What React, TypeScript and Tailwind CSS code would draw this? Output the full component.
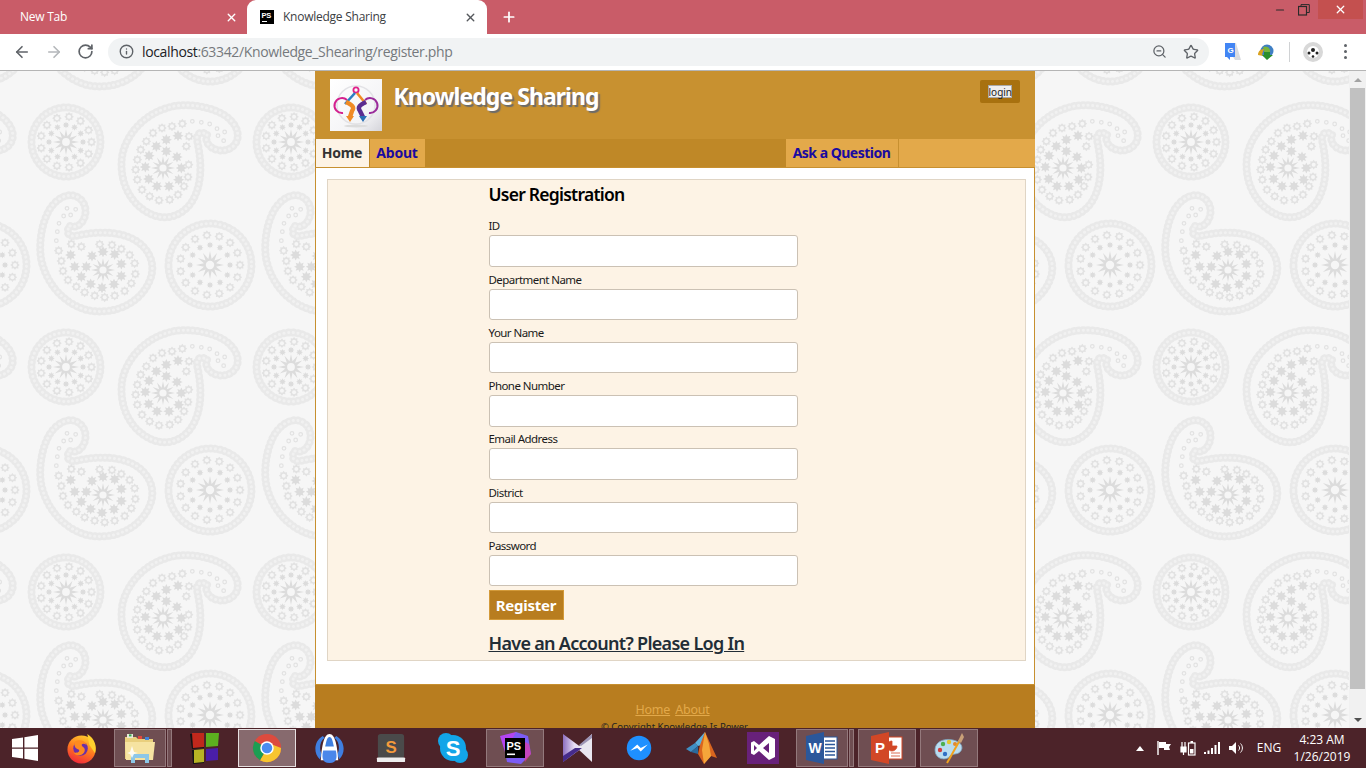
import { ArrowLeft, ArrowRight, RotateCw, Info, ZoomOut, Star, X, Plus, Minus } from "lucide-react";

const INK = "#e2e2e2";
const PAPER = "#f6f6f6";

const starPoints = (r: number, inner: number, n: number) => {
  const pts: string[] = [];
  for (let i = 0; i < n * 2; i++) {
    const rad = i % 2 === 0 ? r : inner;
    const a = (Math.PI * i) / n - Math.PI / 2;
    pts.push(`${(Math.cos(a) * rad).toFixed(2)},${(Math.sin(a) * rad).toFixed(2)}`);
  }
  return pts.join(" ");
};

const onRing = (n: number, r: number) =>
  Array.from({ length: n }, (_, i) => {
    const a = (2 * Math.PI * i) / n;
    return [Math.cos(a) * r, Math.sin(a) * r];
  });

const Gear = ({ x, y }: { x: number; y: number }) => (
  <g transform={`translate(${x} ${y})`}>
    <polygon points={starPoints(4.8, 3.4, 8)} fill={INK} />
    <circle r="2" fill={PAPER} />
  </g>
);

const DarkStar = ({ x, y, r = 5.6 }: { x: number; y: number; r?: number }) => (
  <polygon transform={`translate(${x} ${y})`} points={starPoints(r, r * 0.58, 8)} fill="#dcdcdc" />
);

const Chain = ({ d }: { d: string }) => (
  <g fill="none" strokeLinecap="round">
    <path d={d} stroke="#e9e9e9" strokeWidth="8" strokeDasharray="0.1 4.6" />
    <path d={d} stroke="#f1f1f1" strokeWidth="3" strokeDasharray="0.1 4.6" />
  </g>
);

const circlePath = (r: number) => `M${-r},0 A${r},${r} 0 1 1 ${r},0 A${r},${r} 0 1 1 ${-r},0`;

const CenterStar = ({ r }: { r: number }) => (
  <g>
    <polygon points={starPoints(r, r * 0.45, 12)} fill="#dcdcdc" />
    <circle r={r * 0.3} fill={PAPER} />
  </g>
);

const Medallion = ({ id, chain, gears, gearCount, dots, star }: { id: string; chain: number; gears: number; gearCount: number; dots: number; star: number }) => (
  <g id={id}>
    <Chain d={circlePath(chain)} />
    {onRing(gearCount, gears).map(([x, y], i) => (
      <Gear key={i} x={x} y={y} />
    ))}
    {onRing(12, dots).map(([x, y], i) => (
      <DarkStar key={i} x={x} y={y} r={3.4} />
    ))}
    <CenterStar r={star} />
  </g>
);

// traced from the wallpaper, coordinates are 3x around the centre star
const PAISLEY_STARS = [[535, 198], [500, 210], [470, 230], [500, 245], [448, 258], [532, 262], [437, 292], [545, 295], [447, 328], [537, 330], [472, 350], [508, 350]];
const PAISLEY_GEARS = [[548, 162], [517, 170], [487, 175], [460, 190], [440, 215], [423, 240], [413, 270], [408, 300], [413, 330], [427, 360], [450, 380], [478, 392], [510, 390], [535, 375], [553, 350], [565, 322], [567, 285], [560, 230], [568, 200]];
const PAISLEY_DOTS = [[578, 155], [605, 158], [630, 163], [652, 177], [675, 187], [655, 198], [672, 213]];
const rel = ([x, y]: number[]) => [(x - 490) / 3, (y - 295) / 3];

const Paisley = () => (
  <g id="paisley">
    <Chain d="M44,-33 C40,-22 55,-14 66,-19 C78,-25 78,-40 64,-51 C50,-62 20,-66 4,-60 C-20,-53 -38,-32 -41,-11 C-44,15 -32,38 -10,47 C8,54 24,44 31,30 C40,12 38,-10 34,-28 C33,-34 38,-38 44,-33" />
    {PAISLEY_STARS.map(rel).map(([x, y], i) => (
      <DarkStar key={i} x={x} y={y} />
    ))}
    {PAISLEY_GEARS.map(rel).map(([x, y], i) => (
      <Gear key={i} x={x} y={y} />
    ))}
    {PAISLEY_DOTS.map(rel).map(([x, y], i) => (
      <circle key={i} cx={x} cy={y} r="1.8" fill="none" stroke={INK} strokeWidth="1.2" />
    ))}
    <CenterStar r={12} />
  </g>
);

const Wallpaper = () => {
  const cols = [-1, 0, 1, 2, 3, 4, 5, 6];
  const rows = [-1, 0, 1, 2, 3, 4];
  return (
    <svg className="absolute inset-0 h-full w-full" viewBox="0 71 1366 657" preserveAspectRatio="xMinYMin slice">
      <rect x="0" y="0" width="1366" height="768" fill={PAPER} />
      <defs>
        <Medallion id="m-small" chain={34.5} gears={25.5} gearCount={13} dots={17} star={13} />
        <Medallion id="m-large" chain={41.5} gears={30} gearCount={15} dots={20} star={14} />
        <Paisley />
      </defs>
      {cols.map((c) =>
        rows.map((r) => {
          const dx = c * 225;
          const dy = r * 225;
          return (
            <g key={`${c}-${r}`} transform={`translate(${dx} ${dy})`}>
              <use href="#m-small" x="66" y="142" />
              <use href="#m-large" x="210" y="265" />
              <use href="#paisley" transform="translate(163 168)" />
              <use href="#paisley" transform="translate(103 270) rotate(-90)" />
            </g>
          );
        })
      )}
    </svg>
  );
};

const Logo = () => (
  <svg viewBox="0 0 52 52" className="h-[52px] w-[52px]">
    <defs>
      <linearGradient id="logo-bg" x1="0" y1="0" x2="1" y2="1">
        <stop offset="0" stopColor="#ffffff" />
        <stop offset="0.7" stopColor="#f4f4f6" />
        <stop offset="1" stopColor="#d4d4da" />
      </linearGradient>
    </defs>
    <rect width="52" height="52" fill="url(#logo-bg)" />
    <circle cx="26" cy="26" r="19" fill="none" stroke="#e2e2e6" strokeWidth="1.5" />
    <ellipse cx="26" cy="47" rx="12" ry="1.5" fill="#dcdcdc" />
    <path d="M17 21 A7.5 7.5 0 1 0 13 34" stroke="#d3208f" strokeWidth="2" fill="none" />
    <path d="M35 21 A7.5 7.5 0 1 1 39 34" stroke="#9a2b9a" strokeWidth="2" fill="none" />
    <circle cx="26" cy="11" r="2.6" fill="none" stroke="#e0218a" strokeWidth="1.8" />
    <path d="M25 14 L15 25" stroke="#2b7fc4" strokeWidth="2.6" fill="none" />
    <path d="M27 14 L36 25" stroke="#f08a24" strokeWidth="2.6" fill="none" />
    <path d="M16 23 C22 26 25 28 22 32 L20 38" stroke="#f08a24" strokeWidth="4.4" fill="none" />
    <path d="M36 23 C30 26 27 28 30 32 L33 38" stroke="#5b2d91" strokeWidth="4.4" fill="none" />
    <polygon points="16,37 24,37 20,43" fill="#f08a24" />
    <polygon points="29,37 37,37 33,43" fill="#2b6fb5" />
  </svg>
);

/* ---- taskbar icons ---- */
const WindowsIcon = () => (
  <svg viewBox="0 0 26 26" className="h-[26px] w-[26px]">
    <polygon points="0,4 11,2.4 11,12.4 0,12.4" fill="#fff" />
    <polygon points="12.4,2.2 26,0 26,12.4 12.4,12.4" fill="#fff" />
    <polygon points="0,13.8 11,13.8 11,23.6 0,22" fill="#fff" />
    <polygon points="12.4,13.8 26,13.8 26,26 12.4,23.8" fill="#fff" />
  </svg>
);

const FirefoxIcon = () => (
  <svg viewBox="0 0 32 32" className="h-[31px] w-[31px]">
    <defs>
      <linearGradient id="ff" x1="0.7" y1="0" x2="0.3" y2="1">
        <stop offset="0" stopColor="#ffcb2e" />
        <stop offset="0.5" stopColor="#ff7a1f" />
        <stop offset="1" stopColor="#f0273c" />
      </linearGradient>
    </defs>
    <circle cx="16" cy="17" r="14.5" fill="url(#ff)" />
    <path d="M22 1 C30 6 32 14 30 21 L24 12 Z" fill="#ffd12e" />
    <circle cx="15" cy="16" r="7.5" fill="#6b2fa8" />
    <path d="M9 9 C14 6 20 8 21 12 C17 10 15 12 17 14 C21 16 20 22 14 23 C11 23 9 22 8 20 C12 21 15 19 13 17 C9 16 8 12 9 9Z" fill="#ff8a1f" />
  </svg>
);

const ExplorerIcon = () => (
  <svg viewBox="0 0 32 32" className="h-[32px] w-[32px]">
    <path d="M1 5 H12 L14 7 H29 V27 H1Z" fill="#e9cf7d" />
    <rect x="3" y="2" width="6" height="4" fill="#e9e9d8" />
    <rect x="5" y="2.4" width="2.5" height="2" fill="#2fa84f" />
    <rect x="14" y="4" width="4" height="3" fill="#e2483d" />
    <rect x="21" y="5" width="4" height="3" fill="#3f83d8" />
    <path d="M1 10 H31 L29 28 H2Z" fill="#f6e3a1" />
    <path d="M7 22 H25 V31 H21 V26 H11 V31 H7Z" fill="#8cc7e8" />
    <path d="M6 20 L8 14 L10 20 L14 21 L10 22 L8 26 L6 22 L3 21Z" fill="#ffffff" opacity="0.85" />
  </svg>
);

const ColoredIcon = () => (
  <svg viewBox="0 0 32 32" className="h-[32px] w-[32px]">
    <polygon points="1,2 15,1 15,16 3,17" fill="#131313" />
    <polygon points="3,1 15,1 15,15 4,16" fill="#c0281c" />
    <polygon points="17,1 30,1 29,14 17,15" fill="#5cb01f" />
    <polygon points="3,18 15,17 15,31 4,32" fill="#131313" />
    <polygon points="5,18 15,17 15,30 5,31" fill="#b7b324" />
    <polygon points="17,17 29,16 29,28 17,29" fill="#4a1ea8" />
  </svg>
);

const ChromeIcon = () => (
  <svg viewBox="0 0 32 32" className="h-[30px] w-[30px]">
    <circle cx="16" cy="16" r="15" fill="#dd4b3e" />
    <path d="M16 16 L8.5 29 A15 15 0 0 0 31 16 L16 10Z" fill="#f7c52f" />
    <path d="M16 16 L8.5 29 A15 15 0 0 1 3 8.5 Z" fill="#1b9e53" />
    <circle cx="16" cy="16" r="7.2" fill="#fff" />
    <circle cx="16" cy="16" r="5.6" fill="#4a8cf0" />
  </svg>
);

const SharkIcon = () => (
  <svg viewBox="0 0 32 32" className="h-[31px] w-[31px]">
    <path d="M9 3 C0 8 -1 21 6 27 L8 22 C5 16 6 9 11 5Z" fill="#3f7fe0" />
    <path d="M23 3 C32 8 33 21 26 27 L24 22 C27 16 26 9 21 5Z" fill="#3f7fe0" />
    <path d="M7 28 C8 14 10 1 16 1 C22 1 24 14 25 28Z" fill="#fff" />
    <path d="M16 4 C13.5 4 12.5 9 11.5 14 H20.5 C19.5 9 18.5 4 16 4Z" fill="#3f7fe0" />
    <path d="M9.5 18 H22.5 C24 24 24 31 16 31 C8 31 8 24 9.5 18Z" fill="#4a87ea" />
  </svg>
);

const SublimeIcon = () => (
  <svg viewBox="0 0 32 32" className="h-[30px] w-[30px]">
    <rect x="2" y="1" width="28" height="26" rx="3" fill="#4a4a4a" />
    <rect x="1" y="26" width="30" height="5" rx="1" fill="#eeeeee" />
    <text x="16" y="21" textAnchor="middle" fontSize="18" fontWeight="700" fontFamily="'Liberation Sans', sans-serif" fill="#f39a3c">S</text>
  </svg>
);

const SkypeIcon = () => (
  <svg viewBox="0 0 32 32" className="h-[32px] w-[32px]">
    <circle cx="9" cy="9" r="8" fill="#12a5e8" />
    <circle cx="23" cy="23" r="8" fill="#12a5e8" />
    <circle cx="16" cy="16" r="13" fill="#12a5e8" />
    <text x="16" y="23.5" textAnchor="middle" fontSize="22" fontWeight="700" fontFamily="'Liberation Sans', sans-serif" fill="#fff">S</text>
  </svg>
);

const PhpStormIcon = () => (
  <svg viewBox="0 0 32 32" className="h-[32px] w-[32px]">
    <polygon points="1,4 17,0 20,4 22,16 6,20" fill="#b345f1" />
    <polygon points="17,0 29,4 32,22 22,32 8,30 6,20" fill="#7c5cf5" />
    <polygon points="22,8 30,12 32,22 26,30" fill="#ff318c" opacity="0.55" />
    <rect x="6" y="6" width="20" height="20" fill="#000" />
    <text x="7.5" y="17.5" fontSize="11" fontWeight="700" fontFamily="'Liberation Sans', sans-serif" fill="#fff">PS</text>
    <rect x="8" y="21.5" width="8" height="1.6" fill="#fff" />
  </svg>
);

const KmpIcon = () => (
  <svg viewBox="0 0 32 32" className="h-[32px] w-[32px]">
    <defs>
      <linearGradient id="km" x1="0" y1="0" x2="1" y2="0">
        <stop offset="0" stopColor="#8d6fc0" />
        <stop offset="0.6" stopColor="#e8def5" />
      </linearGradient>
    </defs>
    <polygon points="2,2 21,16 2,30" fill="url(#km)" />
    <polygon points="31,2 31,30 16,16" fill="#e9e6ef" />
    <polygon points="2,30 21,16 14,16 2,24" fill="#452b8a" />
    <polygon points="31,2 31,6 20,14 18,13" fill="#9d95b5" />
  </svg>
);

const MessengerIcon = () => (
  <svg viewBox="0 0 32 32" className="h-[28px] w-[28px]">
    <circle cx="16" cy="16" r="14" fill="#1e90ff" />
    <path d="M6 19 L14 12 L18 16 L26 12 L18 20 L14 16Z" fill="#fff" />
  </svg>
);

const MatlabIcon = () => (
  <svg viewBox="0 0 32 32" className="h-[32px] w-[32px]">
    <polygon points="1,17 10,11 13,14 6,20" fill="#3f8fc4" />
    <polygon points="10,11 20,0 20,12 13,14" fill="#5bb0dc" />
    <polygon points="20,0 32,26 26,24 19,32 13,22 15,13" fill="#d9651f" />
    <polygon points="20,0 24,12 26,24 19,32 17,18" fill="#f5a63a" />
    <polygon points="6,20 13,14 13,22" fill="#2a6a9c" />
  </svg>
);

const VsIcon = () => (
  <svg viewBox="0 0 32 32" className="h-[32px] w-[32px]">
    <rect width="32" height="32" fill="#68217a" />
    <path d="M22 4 L28 7 V25 L22 28 L12 19 L7 23 L4 21.5 V10.5 L7 9 L12 13 Z M22 11 L16 16 L22 21 Z M7 13 V19 L10 16Z" fill="#fff" fillRule="evenodd" />
  </svg>
);

const WordIcon = () => (
  <svg viewBox="0 0 32 32" className="h-[32px] w-[32px]">
    <rect x="16" y="5" width="15" height="22" fill="#fff" stroke="#2b579a" strokeWidth="1" />
    <path d="M19 9 H29 M19 12.5 H29 M19 16 H29 M19 19.5 H29 M19 23 H29" stroke="#2b579a" strokeWidth="1.6" />
    <polygon points="0,4 18,0 18,32 0,28" fill="#2b579a" />
    <text x="9" y="21" textAnchor="middle" fontSize="14" fontWeight="700" fontFamily="'Liberation Sans', sans-serif" fill="#fff">W</text>
  </svg>
);

const PptIcon = () => (
  <svg viewBox="0 0 32 32" className="h-[32px] w-[32px]">
    <rect x="16" y="5" width="15" height="22" fill="#fff" stroke="#d24726" strokeWidth="1" />
    <path d="M21 9 A5 5 0 1 0 26 14 H21Z M20 21 H29 M20 24 H29" fill="#d24726" stroke="#d24726" strokeWidth="0.8" />
    <polygon points="0,4 18,0 18,32 0,28" fill="#d24726" />
    <text x="9" y="21" textAnchor="middle" fontSize="15" fontWeight="700" fontFamily="'Liberation Sans', sans-serif" fill="#fff">P</text>
  </svg>
);

const PaintIcon = () => (
  <svg viewBox="0 0 32 32" className="h-[32px] w-[32px]">
    <path d="M2 18 C2 9 12 6 20 8 C29 10 31 16 27 20 C24 23 20 21 17 24 C14 29 2 28 2 18Z" fill="#b9dcf0" stroke="#7fa8c4" strokeWidth="0.8" />
    <circle cx="7" cy="18" r="2.2" fill="#d23c3c" />
    <circle cx="10" cy="12" r="2.2" fill="#4caf50" />
    <circle cx="16" cy="10" r="2.2" fill="#e3c62f" />
    <circle cx="22" cy="12" r="2" fill="#e38a2f" />
    <circle cx="12" cy="22" r="2.2" fill="#2f6fc4" />
    <path d="M14 31 L27 8" stroke="#f0a21e" strokeWidth="2" />
    <path d="M25 9 L29 1 L31 5 L28 11Z" fill="#c9a078" />
  </svg>
);

const TaskSlot = ({ children, state = "none", stacked = false }: { children: React.ReactNode; state?: "none" | "open" | "active"; stacked?: boolean }) => {
  if (state === "none") {
    return <div className="flex h-[40px] w-[62px] shrink-0 items-center justify-center">{children}</div>;
  }
  const box = state === "active" ? "bg-[#876a6e] border-[#e6dfe0]" : "bg-[#6f4e52] border-[#94797c]";
  if (stacked) {
    return (
      <div className="flex h-[40px] w-[62px] shrink-0 items-center gap-px pl-[2px] pr-[2px]">
        <div className={`flex h-[38px] w-[53px] items-center justify-center border ${box}`}>{children}</div>
        <div className={`h-[38px] w-[5px] border ${box}`} />
      </div>
    );
  }
  return (
    <div className="flex h-[40px] w-[62px] shrink-0 items-center justify-center">
      <div className={`flex h-[38px] w-[58px] items-center justify-center border ${box}`}>{children}</div>
    </div>
  );
};

const Taskbar = () => (
  <div className="flex h-[40px] shrink-0 items-center bg-[#4c2329] font-['Open_Sans',sans-serif] text-white">
    <div className="flex h-[40px] w-[50px] shrink-0 items-center justify-center">
      <WindowsIcon />
    </div>
    <TaskSlot><FirefoxIcon /></TaskSlot>
    <TaskSlot state="open" stacked><ExplorerIcon /></TaskSlot>
    <TaskSlot><ColoredIcon /></TaskSlot>
    <TaskSlot state="active"><ChromeIcon /></TaskSlot>
    <TaskSlot><SharkIcon /></TaskSlot>
    <TaskSlot><SublimeIcon /></TaskSlot>
    <TaskSlot><SkypeIcon /></TaskSlot>
    <TaskSlot state="open"><PhpStormIcon /></TaskSlot>
    <TaskSlot><KmpIcon /></TaskSlot>
    <TaskSlot><MessengerIcon /></TaskSlot>
    <TaskSlot><MatlabIcon /></TaskSlot>
    <TaskSlot><VsIcon /></TaskSlot>
    <TaskSlot state="open" stacked><WordIcon /></TaskSlot>
    <TaskSlot state="open"><PptIcon /></TaskSlot>
    <TaskSlot state="open"><PaintIcon /></TaskSlot>
    <div className="ml-auto flex items-center pr-[14px]">
      <div className="flex w-[24px] justify-center">
        <svg viewBox="0 0 8 5" className="h-[5px] w-[8px]"><polygon points="4,0 8,5 0,5" fill="#fff" /></svg>
      </div>
      <div className="flex w-[24px] justify-center">
        <svg viewBox="0 0 16 16" className="h-[16px] w-[16px]"><path d="M2 1 V15" stroke="#fff" strokeWidth="1.4" /><path d="M3 2 H10 V4 H15 L13 7 L14 10 H8 V8 H3Z" fill="#fff" /></svg>
      </div>
      <div className="flex w-[24px] justify-center">
        <svg viewBox="0 0 16 16" className="h-[16px] w-[16px]"><path d="M1 7 H6 V12 H1Z M2 2 V7 M5 2 V7 M3.5 12 V15" stroke="#fff" strokeWidth="1.2" fill="#fff" /><rect x="8.5" y="3" width="6.5" height="12" fill="none" stroke="#fff" strokeWidth="1.2" /><rect x="10" y="9" width="3.5" height="4.5" fill="#fff" /><rect x="10.5" y="1" width="2.5" height="2" fill="#fff" /></svg>
      </div>
      <div className="flex w-[24px] justify-center">
        <svg viewBox="0 0 16 16" className="h-[16px] w-[16px]"><rect x="0" y="12" width="2" height="2" fill="#fff" /><rect x="3.5" y="10.5" width="2" height="3.5" fill="#fff" /><rect x="7" y="8" width="2" height="6" fill="#fff" /><rect x="10.5" y="5" width="2" height="9" fill="#fff" /><rect x="14" y="2" width="2" height="12" fill="#fff" /></svg>
      </div>
      <div className="flex w-[24px] justify-center">
        <svg viewBox="0 0 16 16" className="h-[16px] w-[16px]"><path d="M1 6 H4 L8 2 V14 L4 10 H1Z" fill="#fff" /><path d="M10.5 5.5 C12 7 12 9 10.5 10.5 M12.5 3.5 C15 6 15 10 12.5 12.5" stroke="#fff" strokeWidth="1" fill="none" /></svg>
      </div>
      <div className="w-[44px] pr-[2px] text-center text-[12px]">ENG</div>
      <div className="w-[60px] text-center text-[12px] leading-[17px]">
        <div>4:23 AM</div>
        <div>1/26/2019</div>
      </div>
    </div>
  </div>
);

const Browser = () => (
  <div className="shrink-0 font-['Open_Sans',sans-serif]">
    <div className="flex h-[34px] items-stretch bg-[#c95c68] text-[12px] tracking-[-0.25px]">
      <div className="flex w-[247px] items-center justify-between pl-[20px] pr-[9px] text-white">
        <span>New Tab</span>
        <X className="h-[13px] w-[13px]" strokeWidth={2.6} />
      </div>
      <div className="relative flex w-[240px] items-center rounded-t-[9px] bg-white pl-[13px] pr-[10px] text-[#3c4043]">
        <svg viewBox="0 0 14 14" className="mr-[9px] h-[14px] w-[14px] shrink-0">
          <rect width="14" height="14" fill="#000" />
          <text x="1.5" y="8" fontSize="7.5" fontWeight="700" fontFamily="'Liberation Sans', sans-serif" fill="#fff">PS</text>
          <rect x="2" y="11" width="5" height="1" fill="#fff" />
        </svg>
        <span>Knowledge Sharing</span>
        <X className="ml-auto h-[13px] w-[13px] text-[#55585c]" strokeWidth={2.6} />
      </div>
      <div className="flex w-[44px] items-center justify-center text-white">
        <Plus className="h-[16px] w-[16px]" strokeWidth={2.6} />
      </div>
      <div className="ml-auto flex h-[19px] items-center pr-[3px] text-[#2a2a2a]">
        <Minus className="mr-[12px] h-[12px] w-[12px]" strokeWidth={2.4} />
        <svg viewBox="0 0 12 12" className="mr-[8px] h-[12px] w-[12px]"><rect x="0.5" y="2.5" width="8" height="8.5" fill="none" stroke="#2a2a2a" strokeWidth="1.2" /><path d="M3 2.5 V0.6 H11.3 V8.5 H8.5" fill="none" stroke="#2a2a2a" strokeWidth="1" /></svg>
        <div className="flex h-[19px] w-[45px] items-center justify-center bg-[#c4504f] text-white">
          <X className="h-[13px] w-[13px]" strokeWidth={2.4} />
        </div>
      </div>
    </div>
    <div className="flex h-[37px] items-center border-b border-[#b5b5b5] bg-white pb-px">
      <div className="flex w-[108px] items-center pl-[13px]">
        <ArrowLeft className="h-[18px] w-[18px] text-[#5f6368]" strokeWidth={2.2} />
        <ArrowRight className="ml-[14px] h-[18px] w-[18px] text-[#b4b7ba]" strokeWidth={2.2} />
        <RotateCw className="ml-[14px] h-[17px] w-[17px] text-[#5f6368]" strokeWidth={2.4} />
      </div>
      <div className="flex h-[28px] w-[1101px] items-center rounded-full bg-[#f1f3f4] pl-[11px] pr-[8px]">
        <Info className="h-[15px] w-[15px] text-[#5f6368]" strokeWidth={2.2} />
        <div className="ml-[8px] text-[14px] tracking-[-0.36px] text-[#75797d]">
          <span className="text-[#202124]">localhost</span>:63342/Knowledge_Shearing/register.php
        </div>
        <ZoomOut className="ml-auto h-[15px] w-[15px] text-[#5f6368]" strokeWidth={2} />
        <Star className="ml-[16px] mr-[2px] h-[16px] w-[16px] text-[#5f6368]" strokeWidth={2} />
      </div>
      <div className="flex flex-1 items-center">
        <svg viewBox="0 0 18 18" className="ml-[16px] h-[18px] w-[18px]">
          <path d="M0 0 H11 L16 17 H10 L8 14 H0Z" fill="#dadce0" />
          <path d="M0 0 H10 V14 H5 V17 L2 14 H0Z" fill="#4285f4" />
          <text x="2.5" y="10" fontSize="8" fontWeight="700" fontFamily="'Liberation Sans', sans-serif" fill="#fff">G</text>
        </svg>
        <svg viewBox="0 0 18 18" className="ml-[14px] h-[18px] w-[18px]">
          <circle cx="10" cy="8" r="6.5" fill="#3f7fc4" />
          <path d="M6 4 C10 2 14 6 13 9 L8 11Z" fill="#79b53b" />
          <path d="M1 12 C1 8 4 6 7 6 L6 9 C5 10 5 12 6 13Z" fill="#d9a21f" />
          <path d="M7 9 H13 V12 H16 L10 17 L5 12 H7Z" fill="#2a8f2a" />
        </svg>
        <div className="ml-[14px] h-[20px] w-px bg-[#d0d2d4]" />
        <svg viewBox="0 0 20 20" className="ml-[13px] h-[20px] w-[20px]">
          <circle cx="10" cy="10" r="10" fill="#d8d8d8" />
          <circle cx="10" cy="10" r="6" fill="#fff" />
          <circle cx="10" cy="8" r="2" fill="#222" />
          <circle cx="6" cy="11" r="1.5" fill="#222" />
          <circle cx="14" cy="11" r="1.5" fill="#222" />
          <circle cx="10" cy="14.5" r="1.3" fill="#222" />
        </svg>
        <div className="ml-[21px] flex flex-col gap-[3px]">
          <span className="h-[3px] w-[3px] rounded-full bg-[#5f6368]" />
          <span className="h-[3px] w-[3px] rounded-full bg-[#5f6368]" />
          <span className="h-[3px] w-[3px] rounded-full bg-[#5f6368]" />
        </div>
      </div>
    </div>
  </div>
);

const FIELDS = ["ID", "Department Name", "Your Name", "Phone Number", "Email Address", "District", "Password"];

const RegisterForm = () => (
  <div className="ml-[11px] mr-[8px] mt-[11px] h-[482px] border border-[#e0d5c5] bg-[#fdf3e5] pl-[161px] pt-[3px] text-black">
    <h2 className="h-[36.3px] text-[17.5px] font-semibold leading-[22px] tracking-[-0.75px]">User Registration</h2>
    {FIELDS.map((label) => (
      <div key={label} className="h-[53.25px]">
        <label className="block h-[16px] text-[11.5px] leading-[14px] tracking-[-0.55px] text-[#1a1a1a]">{label}</label>
        <input type="text" className="block h-[31.5px] w-[309px] rounded-[3px] border border-[#cbc1b4] bg-white" />
      </div>
    ))}
    <button className="-mt-[2px] block h-[30px] w-[75px] border border-[#d39a3a] bg-[#b87d1f] text-[15px] font-bold tracking-[-0.25px] text-white">Register</button>
    <a className="mt-[11px] block text-[18px] font-semibold leading-[24px] tracking-[-0.7px] text-[#222d36] underline">Have an Account? Please Log In</a>
  </div>
);

export default function App() {
  return (
    <div className="flex h-[768px] w-[1366px] flex-col overflow-hidden">
      <Browser />
      <div className="relative flex h-[657px] shrink-0 overflow-hidden">
        <Wallpaper />
        <div className="relative flex-1 overflow-hidden font-['Noto_Sans',sans-serif]">
          <div className="mx-auto w-[720px]">
            <header className="flex h-[68px] items-start justify-between bg-[#c89130] pl-[15px] pr-[15px] pt-[8px]">
              <div className="flex items-start">
                <Logo />
                <h1 className="ml-[12px] mt-px text-[23px] font-bold leading-[32px] tracking-[-0.95px] text-white [text-shadow:2px_2px_1px_#6b6b6b]">Knowledge Sharing</h1>
              </div>
              <div className="mt-px flex h-[23px] w-[40px] items-center justify-center rounded-[2px] bg-[#a8710f]">
                <button className="h-[13px] w-[24px] border border-[#aaa] bg-[#efefef] text-[10px] leading-[10px] text-[#222]">login</button>
              </div>
            </header>
            <nav className="flex h-[28px] items-stretch bg-[#bf8827] text-[14px] font-bold leading-[28px]">
              <a className="ml-px w-[53px] bg-[#fdf3e5] text-center tracking-[-0.3px] text-[#333]">Home</a>
              <a className="ml-px w-[55px] bg-[#e3a94a] text-center tracking-[-0.2px] text-[#1a0aa0]">About</a>
              <div className="ml-[361px] flex flex-1 bg-[#e3a94a]">
                <a className="w-[113px] border-r border-[#c79030] text-center tracking-[-0.5px] text-[#1a0aa0]">Ask a Question</a>
              </div>
            </nav>
            <main className="h-[517px] border-x border-t border-[#c79030] bg-white">
              <RegisterForm />
              <div className="h-[23px]" />
              <footer className="h-[60px] -mx-px border-t border-[#c79030] bg-[#b87d1f] pt-[16px] text-center">
                <div className="pr-[4px] text-[12.5px] leading-[18px] tracking-[-0.2px] text-[#e3a94a]">
                  <a className="underline">Home</a>
                  <a className="ml-[5px] underline">About</a>
                </div>
                <div className="mt-px text-[9.5px] leading-[14px] text-[#222]">© Copyright Knowledge Is Power</div>
              </footer>
            </main>
          </div>
        </div>
        <div className="relative flex w-[17px] shrink-0 flex-col bg-[#f1f1f1]">
          <div className="flex h-[17px] items-center justify-center">
            <svg viewBox="0 0 8 4" className="h-[4px] w-[8px]"><polygon points="4,0 8,4 0,4" fill="#a3a3a3" /></svg>
          </div>
          <div className="mx-px h-[601px] bg-[#c1c1c1]" />
          <div className="mt-auto flex h-[17px] items-center justify-center">
            <svg viewBox="0 0 8 4" className="h-[4px] w-[8px]"><polygon points="0,0 8,0 4,4" fill="#505050" /></svg>
          </div>
        </div>
      </div>
      <Taskbar />
    </div>
  );
}
